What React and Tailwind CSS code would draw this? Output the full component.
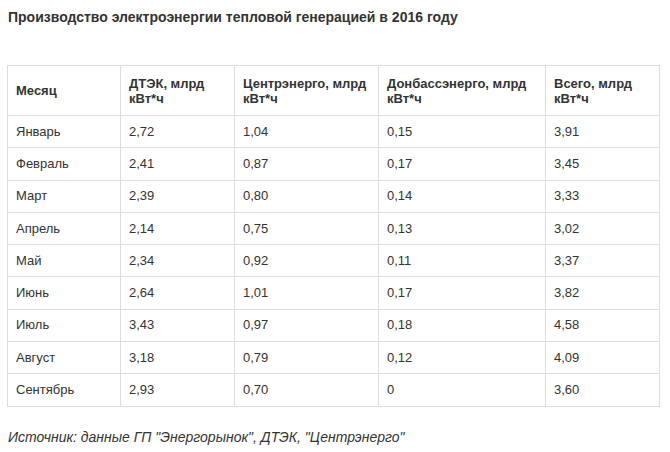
export default function App() {
  const cols = ["Месяц", "ДТЭК, млрд кВт*ч", "Центрэнерго, млрд кВт*ч", "Донбассэнерго, млрд кВт*ч", "Всего, млрд кВт*ч"];
  const widths = ["w-[113px]", "w-[114px]", "w-[144px]", "w-[167px]", "w-[114px]"];
  const rows = [
    ["Январь", "2,72", "1,04", "0,15", "3,91"],
    ["Февраль", "2,41", "0,87", "0,17", "3,45"],
    ["Март", "2,39", "0,80", "0,14", "3,33"],
    ["Апрель", "2,14", "0,75", "0,13", "3,02"],
    ["Май", "2,34", "0,92", "0,11", "3,37"],
    ["Июнь", "2,64", "1,01", "0,17", "3,82"],
    ["Июль", "3,43", "0,97", "0,18", "4,58"],
    ["Август", "3,18", "0,79", "0,12", "4,09"],
    ["Сентябрь", "2,93", "0,70", "0", "3,60"],
  ];
  return (
    <div className="w-[670px] h-[452px] bg-white text-[#333] font-['Liberation_Sans',Arial,sans-serif] text-[13px] overflow-hidden">
      <div className="pl-[8px] pt-[9px] font-bold text-[14px] leading-[16px]">
        Производство электроэнергии тепловой генерацией в 2016 году
      </div>
      <div className="pl-[7px] pt-[40px]">
        <table className="border-collapse table-fixed w-[652px]">
          <thead>
            <tr className="h-[50px]">
              {cols.map((c, i) => (
                <th key={i} className={`${widths[i]} border border-[#dddddd] text-left align-middle px-[8px] font-bold leading-[15px]`}>
                  {c}
                </th>
              ))}
            </tr>
          </thead>
          <tbody>
            {rows.map((r, ri) => (
              <tr key={ri} className="h-[32.3px]">
                {r.map((c, ci) => (
                  <td key={ci} className="border border-[#dddddd] px-[8px] align-middle leading-[16px]">
                    {c}
                  </td>
                ))}
              </tr>
            ))}
          </tbody>
        </table>
      </div>
      <div className="pl-[8px] pt-[22px] italic text-[14px] leading-[16px]">
        Источник: данные ГП "Энергорынок", ДТЭК, "Центрэнерго"
      </div>
    </div>
  );
}
